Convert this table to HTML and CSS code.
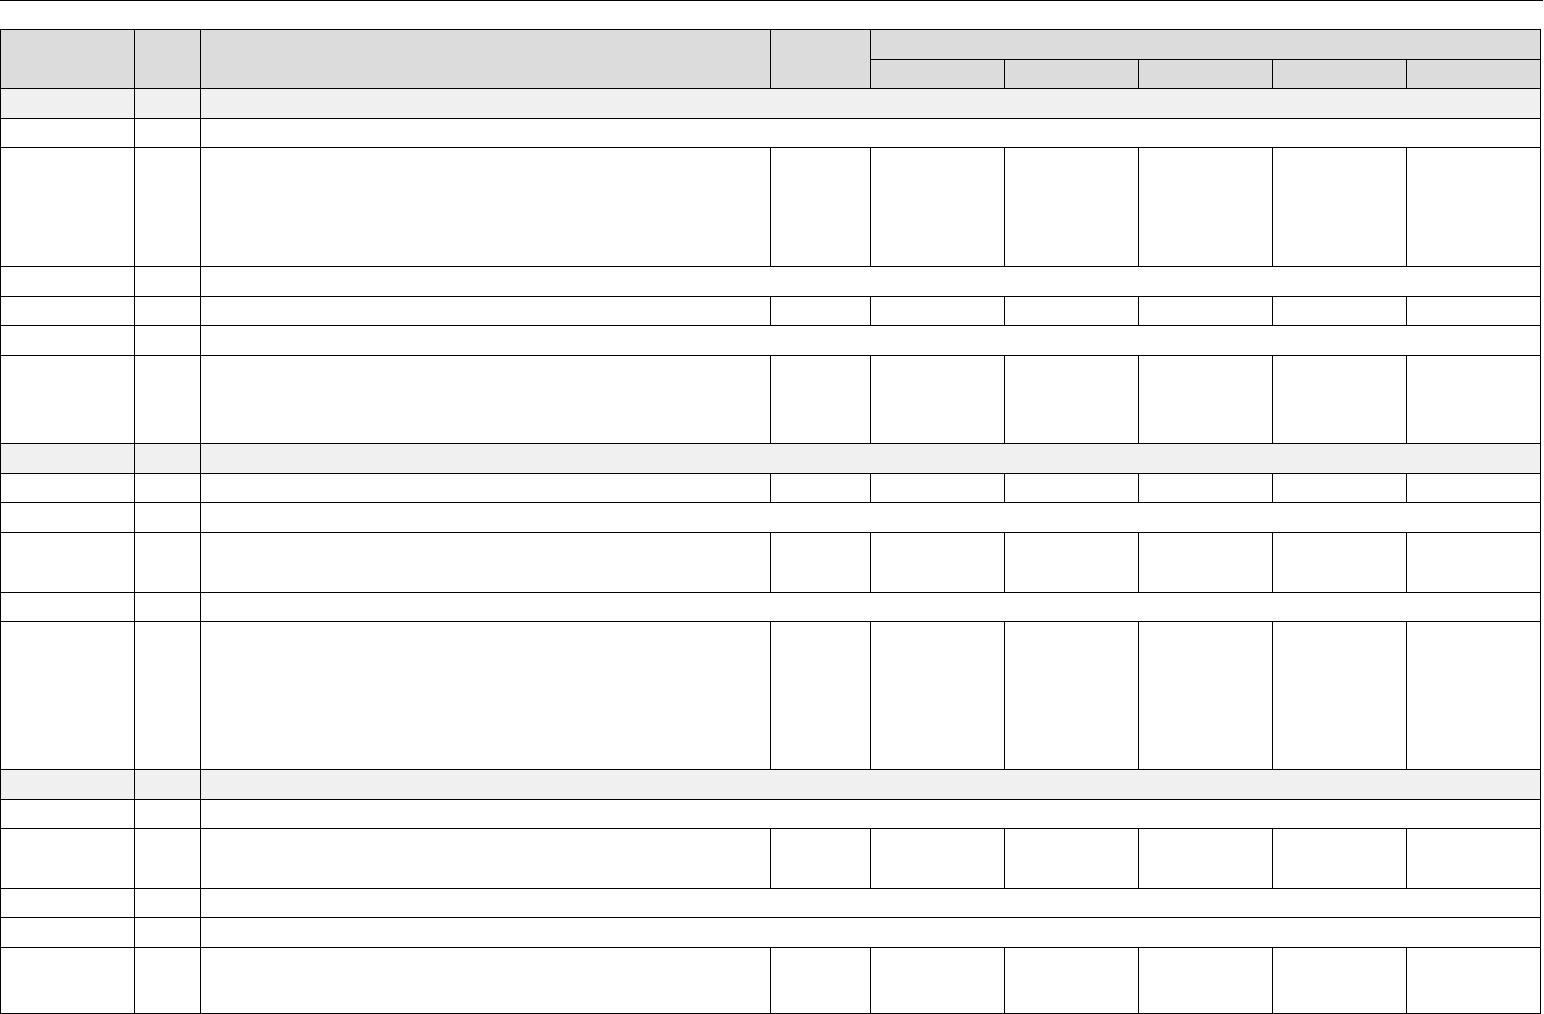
FILE: index.html
```html
<!DOCTYPE html>
<html lang="en">
<head>
<meta charset="utf-8">
<title>Table</title>
<link rel="stylesheet" href="styles.css">
</head>
<body>
<div class="rule"></div>
<div class="sheet">
  <div class="c hd tall"></div><div class="c hd tall"></div><div class="c hd tall"></div><div class="c hd tall"></div>
  <div class="c hd group"></div>
  <div class="c hd"></div><div class="c hd"></div><div class="c hd"></div><div class="c hd"></div><div class="c hd"></div>

  <div class="c sec"></div><div class="c sec"></div><div class="c sec rest"></div>
  <div class="c"></div><div class="c"></div><div class="c rest"></div>
  <div class="c"></div><div class="c"></div><div class="c"></div><div class="c"></div><div class="c"></div><div class="c"></div><div class="c"></div><div class="c"></div><div class="c"></div>
  <div class="c"></div><div class="c"></div><div class="c rest"></div>
  <div class="c"></div><div class="c"></div><div class="c"></div><div class="c"></div><div class="c"></div><div class="c"></div><div class="c"></div><div class="c"></div><div class="c"></div>
  <div class="c"></div><div class="c"></div><div class="c rest"></div>
  <div class="c"></div><div class="c"></div><div class="c"></div><div class="c"></div><div class="c"></div><div class="c"></div><div class="c"></div><div class="c"></div><div class="c"></div>

  <div class="c sec"></div><div class="c sec"></div><div class="c sec rest"></div>
  <div class="c"></div><div class="c"></div><div class="c"></div><div class="c"></div><div class="c"></div><div class="c"></div><div class="c"></div><div class="c"></div><div class="c"></div>
  <div class="c"></div><div class="c"></div><div class="c rest"></div>
  <div class="c"></div><div class="c"></div><div class="c"></div><div class="c"></div><div class="c"></div><div class="c"></div><div class="c"></div><div class="c"></div><div class="c"></div>
  <div class="c"></div><div class="c"></div><div class="c rest"></div>
  <div class="c"></div><div class="c"></div><div class="c"></div><div class="c"></div><div class="c"></div><div class="c"></div><div class="c"></div><div class="c"></div><div class="c"></div>

  <div class="c sec"></div><div class="c sec"></div><div class="c sec rest"></div>
  <div class="c"></div><div class="c"></div><div class="c rest"></div>
  <div class="c"></div><div class="c"></div><div class="c"></div><div class="c"></div><div class="c"></div><div class="c"></div><div class="c"></div><div class="c"></div><div class="c"></div>
  <div class="c"></div><div class="c"></div><div class="c rest"></div>
  <div class="c"></div><div class="c"></div><div class="c rest"></div>
  <div class="c"></div><div class="c"></div><div class="c"></div><div class="c"></div><div class="c"></div><div class="c"></div><div class="c"></div><div class="c"></div><div class="c"></div>
</div>
</body>
</html>
```
FILE: styles.css
```css
html, body {
  margin: 0;
  padding: 0;
  background: #ffffff;
  font-family: "Liberation Sans", Arial, sans-serif;
  overflow: hidden;
}
.rule {
  width: 1543px;
  height: 1px;
  background: #000000;
}
.sheet {
  margin-top: 28px;
  display: grid;
  width: max-content;
  grid-template-columns: 133px 65px 569px 99px 133px 133px 133px 133px 133px;
  grid-template-rows: 29px 28px 29px 28px 118px 29px 28px 29px 87px 29px 28px 29px 59px 28px 147px 29px 28px 59px 28px 29px 65px;
  gap: 1px;
  padding: 1px;
  background: #000000;
}
.c {
  background: #ffffff;
}
.hd {
  background: #dcdcdc;
}
.tall {
  grid-row: span 2;
}
.group {
  grid-column: 5 / -1;
}
.sec {
  background: #f0f0f0;
}
.rest {
  grid-column: 3 / -1;
}
```
